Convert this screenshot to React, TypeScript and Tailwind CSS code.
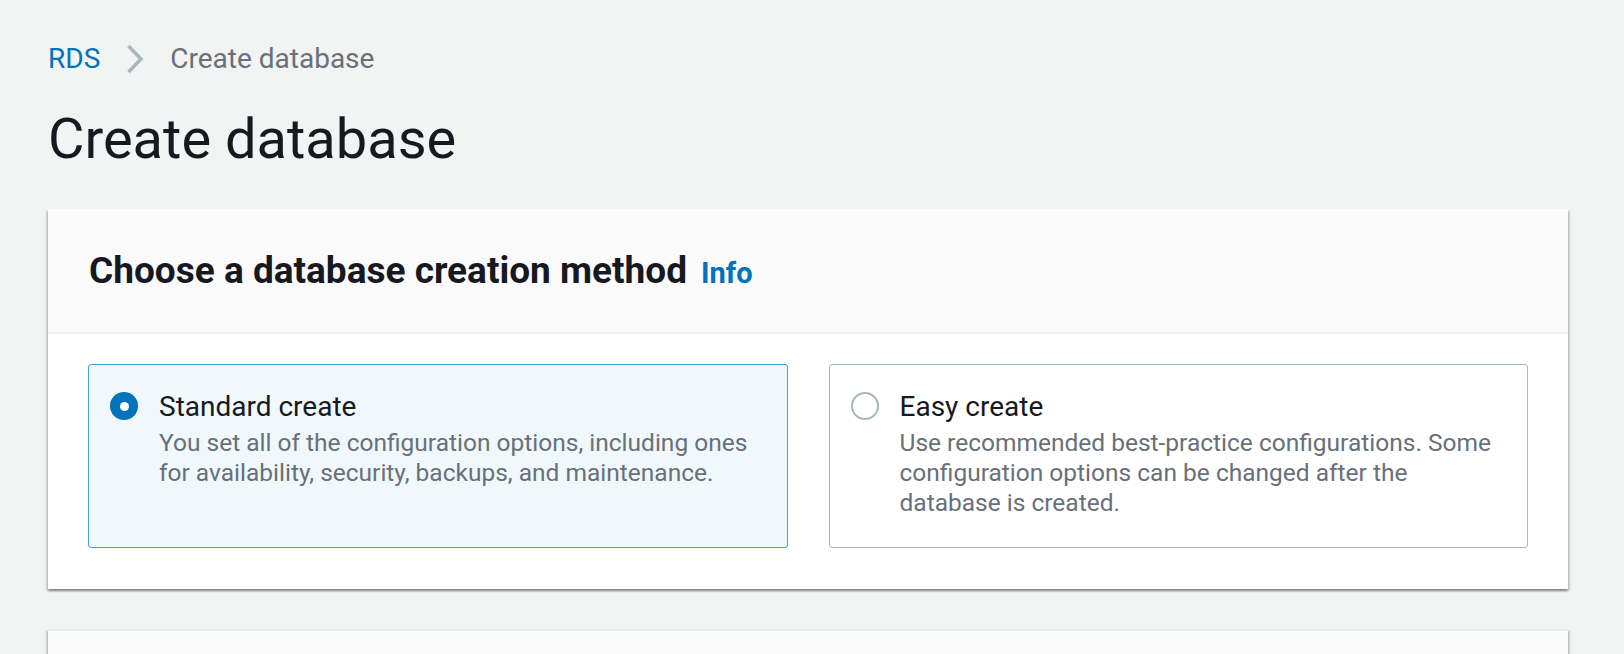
import React from "react";

function Chevron() {
  return (
    <svg width="18" height="30" viewBox="0 0 18 30" className="mx-[26px]" aria-hidden>
      <path d="M2.5 2 L15 15 L2.5 28" fill="none" stroke="#aab7b8" strokeWidth="3.5" strokeLinejoin="miter" />
    </svg>
  );
}

function Radio({ checked }: { checked: boolean }) {
  if (checked) {
    return (
      <span className="mt-[3px] flex h-[28px] w-[28px] shrink-0 items-center justify-center rounded-full bg-[#0073bb]">
        <span className="h-[9px] w-[9px] rounded-full bg-white" />
      </span>
    );
  }
  return <span className="mt-[3px] h-[28px] w-[28px] shrink-0 rounded-full border-[2px] border-[#aab7b8] bg-white" />;
}

function Tile({
  checked,
  title,
  desc,
}: {
  checked: boolean;
  title: string;
  desc: string;
}) {
  return (
    <div
      className={
        checked
          ? "flex gap-[21px] rounded-[3px] border-[1.5px] border-[#44a3c9] bg-[#f1f8fc] pb-[29px] pl-[21px] pr-[30px] pt-[24px]"
          : "flex gap-[21px] rounded-[3px] border-[1.5px] border-[#aab7b8] bg-white pb-[29px] pl-[21px] pr-[30px] pt-[24px]"
      }
    >
      <Radio checked={checked} />
      <div className="min-w-0">
        <div className="text-[28px] leading-[36px] text-[#16191f]">{title}</div>
        <div className="mt-[3px] text-[24.5px] leading-[30px] text-[#687078]">{desc}</div>
      </div>
    </div>
  );
}

export default function App() {
  return (
    <div
      className="min-h-[654px] bg-[#f2f3f3] pl-[48px] pr-[56px] pt-[41px]"
      style={{ fontFamily: "Roboto, 'Open Sans', sans-serif" }}
    >
      <nav className="flex h-[36px] items-center text-[28px] leading-[36px]">
        <span className="text-[#0073bb]">RDS</span>
        <Chevron />
        <span className="text-[#687078]">Create database</span>
      </nav>
      <h1 className="mt-[28px] text-[56px] font-normal leading-[68px] text-[#16191f]">Create database</h1>
      <section className="mt-[36px] bg-white shadow-[0_2px_2px_0_rgba(0,28,36,0.3),2px_2px_2px_0_rgba(0,28,36,0.15),-2px_2px_2px_0_rgba(0,28,36,0.15)]">
        <div className="border-b-[2px] border-[#eaeded] bg-[#fafafa] px-[41px] pb-[36px] pt-[39px]">
          <h2 className="flex items-baseline text-[37px] font-bold leading-[46px] text-[#16191f]">
            Choose a database creation method
            <span className="ml-[14px] text-[29px] font-bold text-[#0073bb]">Info</span>
          </h2>
        </div>
        <div className="grid grid-cols-2 gap-[41px] pb-[41px] pl-[40px] pr-[40px] pt-[30px]">
          <Tile
            checked
            title="Standard create"
            desc="You set all of the configuration options, including ones for availability, security, backups, and maintenance."
          />
          <Tile
            checked={false}
            title="Easy create"
            desc="Use recommended best-practice configurations. Some configuration options can be changed after the database is created."
          />
        </div>
      </section>
      <section className="mt-[40px] h-[120px] border-t-[2px] border-[#eaeded] bg-[#fafafa] shadow-[0_2px_2px_0_rgba(0,28,36,0.3),2px_2px_2px_0_rgba(0,28,36,0.15),-2px_2px_2px_0_rgba(0,28,36,0.15)]" />
    </div>
  );
}
